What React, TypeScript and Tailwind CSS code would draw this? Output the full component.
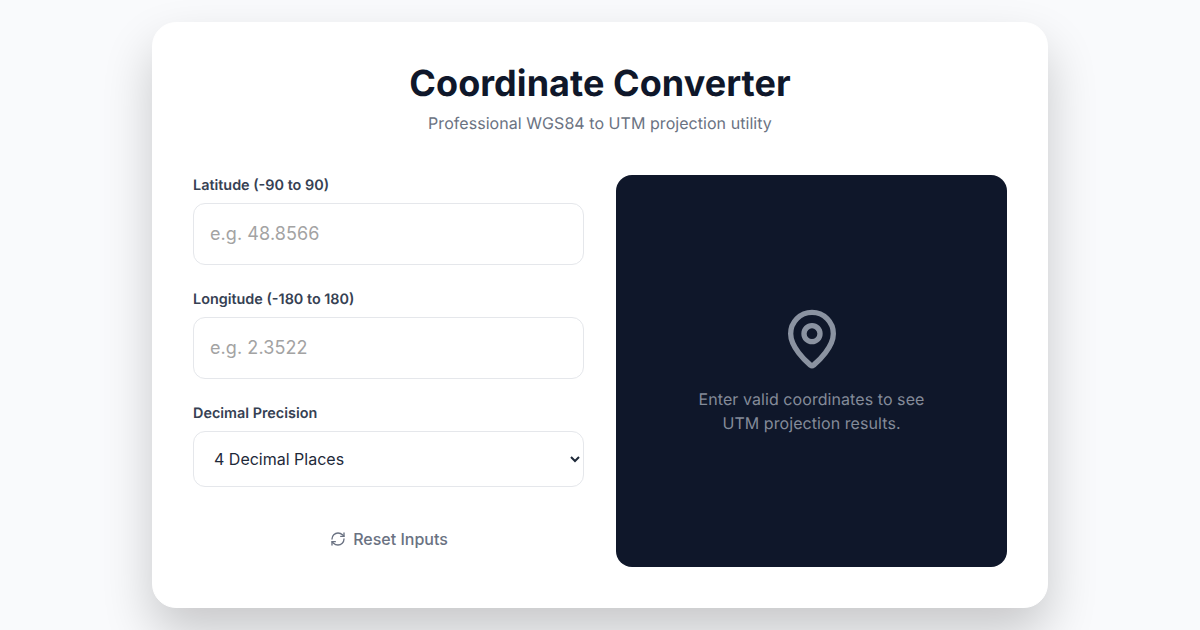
import { MapPin, RefreshCw } from 'lucide-react';

const font = "font-['Inter',sans-serif] [text-rendering:geometricPrecision] antialiased";

function Field({ label, placeholder }: { label: string; placeholder: string }) {
  return (
    <div className="flex flex-col gap-1.5">
      <label className="text-[14.4px] leading-[22px] font-semibold text-gray-700">{label}</label>
      <input
        type="text"
        placeholder={placeholder}
        className="h-[62px] w-full rounded-xl border border-gray-200 bg-white px-4 pb-0.5 text-lg tracking-[0.08px] text-gray-800 outline-none placeholder:text-[#a3a3a3]"
      />
    </div>
  );
}

export default function App() {
  return (
    <div className={`${font} flex h-[630px] w-[1200px] items-center justify-center overflow-hidden bg-[#f9fafc]`}>
      <div className="w-[896px] rounded-3xl border border-white bg-white p-10 shadow-[0_25px_50px_rgba(0,0,0,0.2)]">
        <div className="mb-10 text-center">
          <h1 className="mb-2 text-4xl font-bold tracking-[0.05px] text-[#0f172a]">Coordinate Converter</h1>
          <p className="text-base tracking-[0.05px] text-gray-500">Professional WGS84 to UTM projection utility</p>
        </div>

        <div className="grid grid-cols-2 gap-8">
          <div className="flex flex-col gap-6">
            <Field label="Latitude (-90 to 90)" placeholder="e.g. 48.8566" />
            <Field label="Longitude (-180 to 180)" placeholder="e.g. 2.3522" />
            <div className="flex flex-col gap-1.5">
              <label className="text-[14.4px] leading-[22px] font-semibold text-gray-700">Decimal Precision</label>
              <select
                defaultValue="4"
                className="h-14 w-full rounded-xl border border-gray-200 bg-white px-4 text-base text-gray-800 outline-none"
              >
                <option value="2">2 Decimal Places</option>
                <option value="4">4 Decimal Places</option>
                <option value="6">6 Decimal Places</option>
              </select>
            </div>
            <button className="mt-2 flex items-center justify-center gap-[7px] pt-2 pb-4 pl-px text-base font-medium text-gray-500">
              <RefreshCw size={16} />
              Reset Inputs
            </button>
          </div>

          <div className="flex flex-col items-center justify-center rounded-2xl bg-[#0f172a] p-8 text-center">
            <MapPin size={64} className="mb-4 text-[#8b93a1]" />
            <p className="text-base tracking-[0.07px] text-[#848b99]">
              Enter valid coordinates to see
              <br />
              UTM projection results.
            </p>
          </div>
        </div>
      </div>
    </div>
  );
}
